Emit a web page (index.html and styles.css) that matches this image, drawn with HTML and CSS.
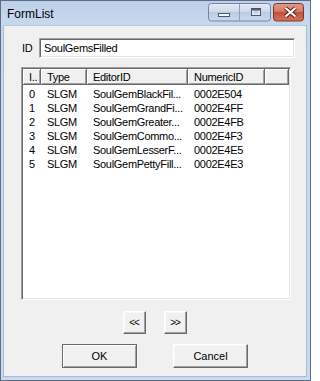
FILE: index.html
```html
<!DOCTYPE html>
<html>
<head>
<meta charset="utf-8">
<title>FormList</title>
<link rel="stylesheet" href="styles.css">
</head>
<body>
<div class="window">
  <div class="titlebar">
    <span class="title">FormList</span>
    <svg class="caption-buttons" width="96" height="19" viewBox="0 0 96 19">
      <defs>
        <linearGradient id="gBlue" x1="0" y1="0" x2="0" y2="1">
          <stop offset="0" stop-color="#e3ebf6"/>
          <stop offset="0.45" stop-color="#cfdbeb"/>
          <stop offset="0.5" stop-color="#b9cbe3"/>
          <stop offset="1" stop-color="#cbdaee"/>
        </linearGradient>
        <linearGradient id="gRed" x1="0" y1="0" x2="0" y2="1">
          <stop offset="0" stop-color="#e39a8a"/>
          <stop offset="0.45" stop-color="#d67a66"/>
          <stop offset="0.5" stop-color="#c44f3b"/>
          <stop offset="1" stop-color="#d5735a"/>
        </linearGradient>
      </defs>
      <rect x="0.5" y="0.5" width="62" height="17.5" rx="3" fill="url(#gBlue)" stroke="#72849f"/>
      <line x1="31.5" y1="1" x2="31.5" y2="18" stroke="#8d9fb8"/>
      <rect x="65.5" y="0.5" width="30" height="17.5" rx="3" fill="url(#gRed)" stroke="#803229"/>
      <rect x="10.5" y="10.5" width="11" height="3" fill="#f4f7fb" stroke="#4a5669"/>
      <rect x="43.5" y="5.5" width="9" height="7" fill="#e3eaf4" stroke="#4a5669"/>
      <line x1="44" y1="6.8" x2="52" y2="6.8" stroke="#4a5669" stroke-width="1.5"/>
      <rect x="46" y="8" width="4" height="2.5" fill="#c3d1e5"/>
      <path d="M77.5 5 L87.5 13.5 M87.5 5 L77.5 13.5" stroke="#5c1d16" stroke-width="4.2"/>
      <path d="M77.5 5 L87.5 13.5 M87.5 5 L77.5 13.5" stroke="#ffffff" stroke-width="2.2"/>
    </svg>
  </div>
  <div class="client">
    <div class="id-row">
      <span class="id-label">ID</span>
      <div class="textbox">SoulGemsFilled</div>
    </div>
    <div class="listview">
      <div class="lv-header">
        <div class="hc c0">I..</div>
        <div class="hc c1">Type</div>
        <div class="hc c2">EditorID</div>
        <div class="hc c3">NumericID</div>
        <div class="hc filler"></div>
      </div>
      <div class="lv-body">
        <div class="lv-row"><span class="cell c0">0</span><span class="cell c1">SLGM</span><span class="cell c2">SoulGemBlackFil...</span><span class="cell c3">0002E504</span></div>
        <div class="lv-row"><span class="cell c0">1</span><span class="cell c1">SLGM</span><span class="cell c2">SoulGemGrandFi...</span><span class="cell c3">0002E4FF</span></div>
        <div class="lv-row"><span class="cell c0">2</span><span class="cell c1">SLGM</span><span class="cell c2">SoulGemGreater...</span><span class="cell c3">0002E4FB</span></div>
        <div class="lv-row"><span class="cell c0">3</span><span class="cell c1">SLGM</span><span class="cell c2">SoulGemCommo...</span><span class="cell c3">0002E4F3</span></div>
        <div class="lv-row"><span class="cell c0">4</span><span class="cell c1">SLGM</span><span class="cell c2">SoulGemLesserF...</span><span class="cell c3">0002E4E5</span></div>
        <div class="lv-row"><span class="cell c0">5</span><span class="cell c1">SLGM</span><span class="cell c2">SoulGemPettyFill...</span><span class="cell c3">0002E4E3</span></div>
      </div>
    </div>
    <div class="nav-row">
      <button class="btn nav">&lt;&lt;</button>
      <button class="btn nav">&gt;&gt;</button>
    </div>
    <div class="action-row">
      <button class="btn action default">OK</button>
      <button class="btn action">Cancel</button>
    </div>
  </div>
</div>
</body>
</html>
```

FILE: styles.css
```css
* {
  box-sizing: border-box;
}

html,
body {
  margin: 0;
  padding: 0;
}

body {
  width: 311px;
  height: 381px;
  overflow: hidden;
  background: #ffffff;
  font-family: "Liberation Sans", Arial, sans-serif;
  font-size: 11px;
  color: #000000;
}

.window {
  width: 311px;
  height: 381px;
  border: 1px solid #5c6f89;
  background: linear-gradient(#bdd1ea, #c6d8ee 22px, #c9daee);
  padding: 0 3px 3px 2px;
  display: flex;
  flex-direction: column;
}

.titlebar {
  height: 24px;
  flex: none;
  display: flex;
  align-items: flex-start;
  padding: 2px 3px 0 4px;
}

.title {
  font-size: 12px;
  line-height: 18px;
  margin-top: 2px;
  color: #000000;
}

.caption-buttons {
  margin-left: auto;
  display: block;
}

.client {
  flex: 1;
  background: #f0f0f0;
  border: 1px solid #a9bbd1;
  border-top-color: #b4c5da;
  padding-top: 12px;
  display: flex;
  flex-direction: column;
}

.id-row {
  display: flex;
  height: 20px;
  margin-left: 18px;
}

.id-label {
  width: 17px;
  line-height: 20px;
  letter-spacing: -0.3px;
}

.textbox {
  width: 256px;
  height: 20px;
  background: #ffffff;
  border: 1px solid;
  border-color: #a0a0a0 #ffffff #ffffff #a0a0a0;
  box-shadow: inset 1px 1px #696969, inset -1px -1px #e3e3e3;
  padding-left: 4px;
  line-height: 18px;
  letter-spacing: -0.3px;
}

.listview {
  margin-top: 9px;
  margin-left: 17px;
  width: 270px;
  height: 233px;
  background: #ffffff;
  border: 1px solid;
  border-color: #a0a0a0 #ffffff #ffffff #a0a0a0;
  box-shadow: inset 1px 1px #696969, inset -1px -1px #e3e3e3;
  padding: 1px;
  display: flex;
  flex-direction: column;
}

.lv-header {
  display: flex;
  height: 16px;
  flex: none;
}

.hc {
  height: 16px;
  background: #f0f0f0;
  border-right: 1px solid #696969;
  border-bottom: 1px solid #696969;
  box-shadow: inset 1px 1px #ffffff, inset -1px -1px #a0a0a0;
  padding: 1px 0 0 6px;
  line-height: 14px;
  white-space: nowrap;
  overflow: hidden;
  letter-spacing: -0.3px;
}

.c0 {
  width: 18px;
  flex: none;
}

.c1 {
  width: 46px;
  flex: none;
}

.c2 {
  width: 101px;
  flex: none;
}

.c3 {
  width: 77px;
  flex: none;
}

.filler {
  flex: 1;
}

.lv-body {
  padding-top: 2px;
  flex: 1;
}

.lv-row {
  display: flex;
  height: 14px;
}

.cell {
  padding-left: 6px;
  line-height: 14px;
  white-space: nowrap;
  overflow: hidden;
  letter-spacing: -0.3px;
}

.nav-row {
  display: flex;
  justify-content: center;
  gap: 18px;
  margin-top: 11px;
}

.action-row {
  display: flex;
  justify-content: center;
  gap: 36px;
  margin-top: 10px;
}

.btn {
  font-family: "Liberation Sans", Arial, sans-serif;
  font-size: 11px;
  color: #000000;
  background: #f0f0f0;
  border: 1px solid;
  border-color: #ffffff #696969 #696969 #ffffff;
  box-shadow: inset -1px -1px #a0a0a0, inset 1px 1px #f8f8f8;
  padding: 0;
  margin: 0;
  line-height: 21px;
}

.nav {
  width: 23px;
  height: 23px;
  font-size: 10px;
  letter-spacing: -1px;
  padding-right: 1px;
}

.action {
  width: 75px;
  height: 24px;
  line-height: 22px;
}

.action.default {
  border-color: #696969;
  box-shadow: inset 1px 1px #ffffff, inset -1px -1px #a0a0a0;
}
```
